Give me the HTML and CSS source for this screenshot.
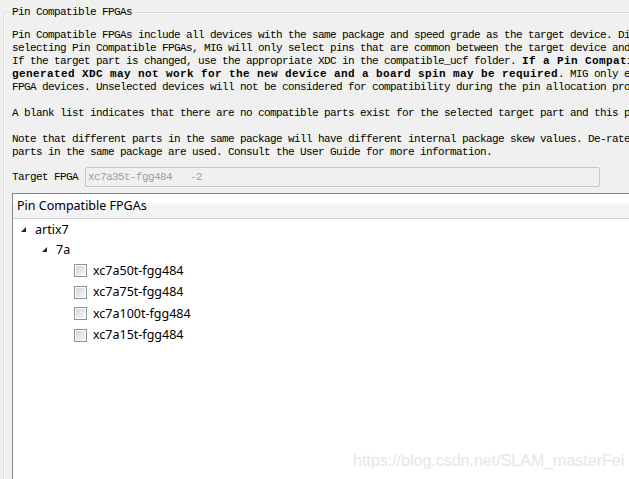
FILE: index.html
```html
<!DOCTYPE html>
<html>
<head>
<meta charset="utf-8">
<link rel="stylesheet" href="styles.css">
</head>
<body>
<div class="group">
  <div class="group-title">Pin Compatible FPGAs</div>
  <div class="desc">
    <div class="para">
      <div class="line">Pin Compatible FPGAs include all devices with the same package and speed grade as the target device. Different</div>
      <div class="line">selecting Pin Compatible FPGAs, MIG will only select pins that are common between the target device and all</div>
      <div class="line">If the target part is changed, use the appropriate XDC in the compatible_ucf folder. <b>If a Pin Compatible</b></div>
      <div class="line"><b>generated XDC may not work for the new device and a board spin may be required</b>. MIG only exports</div>
      <div class="line">FPGA devices. Unselected devices will not be considered for compatibility during the pin allocation process.</div>
    </div>
    <div class="para">
      <div class="line">A blank list indicates that there are no compatible parts exist for the selected target part and this package.</div>
    </div>
    <div class="para">
      <div class="line">Note that different parts in the same package will have different internal package skew values. De-rate</div>
      <div class="line">parts in the same package are used. Consult the User Guide for more information.</div>
    </div>
  </div>
  <div class="target-row">
    <span class="target-label">Target FPGA</span>
    <div class="target-input">xc7a35t-fgg484&nbsp;&nbsp;&nbsp;-2</div>
  </div>
  <div class="panel">
    <div class="panel-header">Pin Compatible FPGAs</div>
    <div class="tree">
      <div class="node node-l0">
        <svg class="tri" width="6" height="6" viewBox="0 0 6 6"><polygon points="5,0 5,5 0,5" fill="#262626"/></svg>
        <span>artix7</span>
      </div>
      <div class="node node-l1">
        <svg class="tri" width="6" height="6" viewBox="0 0 6 6"><polygon points="5,0 5,5 0,5" fill="#262626"/></svg>
        <span>7a</span>
      </div>
      <div class="leaf"><span class="check"><span class="check-in"></span></span><span>xc7a50t-fgg484</span></div>
      <div class="leaf"><span class="check"><span class="check-in"></span></span><span>xc7a75t-fgg484</span></div>
      <div class="leaf"><span class="check"><span class="check-in"></span></span><span>xc7a100t-fgg484</span></div>
      <div class="leaf"><span class="check"><span class="check-in"></span></span><span>xc7a15t-fgg484</span></div>
    </div>
  </div>
</div>
<div class="watermark">https://blog.csdn.net/SLAM_masterFei</div>
</body>
</html>
```
FILE: styles.css
```css
html, body {
  margin: 0;
  padding: 0;
}
body {
  width: 629px;
  height: 479px;
  overflow: hidden;
  background: #f0f0f0;
  position: relative;
}
.group {
  margin: 12px 0 0 3px;
  border-top: 1px solid #d5dfe5;
  border-left: 1px solid #d5dfe5;
  border-top-left-radius: 4px;
  box-shadow: inset 1px 1px 0 #ffffff;
  padding-left: 8px;
  width: 700px;
  height: 600px;
  font-size: 11px;
  line-height: 13px;
}
.group-title,
.desc,
.target-row {
  font-family: "Liberation Mono", monospace;
  font-size: 11px;
  letter-spacing: -0.6px;
  line-height: 13px;
  color: #000;
}
.group-title {
  display: block;
  width: fit-content;
  margin-top: -7px;
  margin-left: -2px;
  padding: 0 2px;
  background: #f0f0f0;
}
.desc {
  margin-top: 10px;
  display: flex;
  flex-direction: column;
  gap: 13px;
}
.line {
  white-space: nowrap;
}
.line b {
  font-weight: bold;
  letter-spacing: 0.4px;
}
.target-row {
  margin-top: 8px;
  display: flex;
  align-items: center;
  gap: 7px;
}
.target-label {
  width: 66px;
}
.target-input {
  width: 509px;
  height: 18px;
  border: 1px solid #c8c8c8;
  border-radius: 2px;
  padding: 0 2px;
  line-height: 18px;
  color: #a0a0a0;
  background: #f0f0f0;
}
.panel {
  margin-top: 6px;
  border: 1px solid #828790;
  background: #ffffff;
  height: 400px;
}
.panel-header {
  height: 24px;
  line-height: 24px;
  padding-left: 4px;
  border-bottom: 1px solid #d5d5d5;
  background: linear-gradient(#ffffff 0%, #ffffff 35%, #f4f5f7 45%, #f1f2f4 100%);
  font-family: "Noto Sans", sans-serif;
  font-size: 12.5px;
  color: #000;
}
.tree {
  padding-top: 1px;
  font-family: "Noto Sans", sans-serif;
  font-size: 12.5px;
  line-height: 16px;
  color: #000;
}
.node {
  height: 20px;
  display: flex;
  align-items: center;
}
.node-l0 {
  padding-left: 8px;
}
.node-l1 {
  padding-left: 29px;
}
.tri {
  display: block;
  margin-right: 8px;
}
.leaf {
  height: 21.5px;
  display: flex;
  align-items: center;
  padding-left: 61px;
}
.check {
  width: 11px;
  height: 11px;
  border: 1px solid #8e8f8f;
  background: #ffffff;
  box-sizing: content-box;
  display: flex;
  align-items: center;
  justify-content: center;
  margin-right: 6px;
}
.check-in {
  width: 9px;
  height: 9px;
  background: linear-gradient(135deg, #d3d3d3 0%, #e6e6e6 50%, #f6f6f6 100%);
}
.watermark {
  position: absolute;
  left: 353px;
  top: 451px;
  font-family: "Liberation Sans", sans-serif;
  font-size: 16px;
  line-height: 20px;
  color: #e6e6e6;
  white-space: nowrap;
}
```
